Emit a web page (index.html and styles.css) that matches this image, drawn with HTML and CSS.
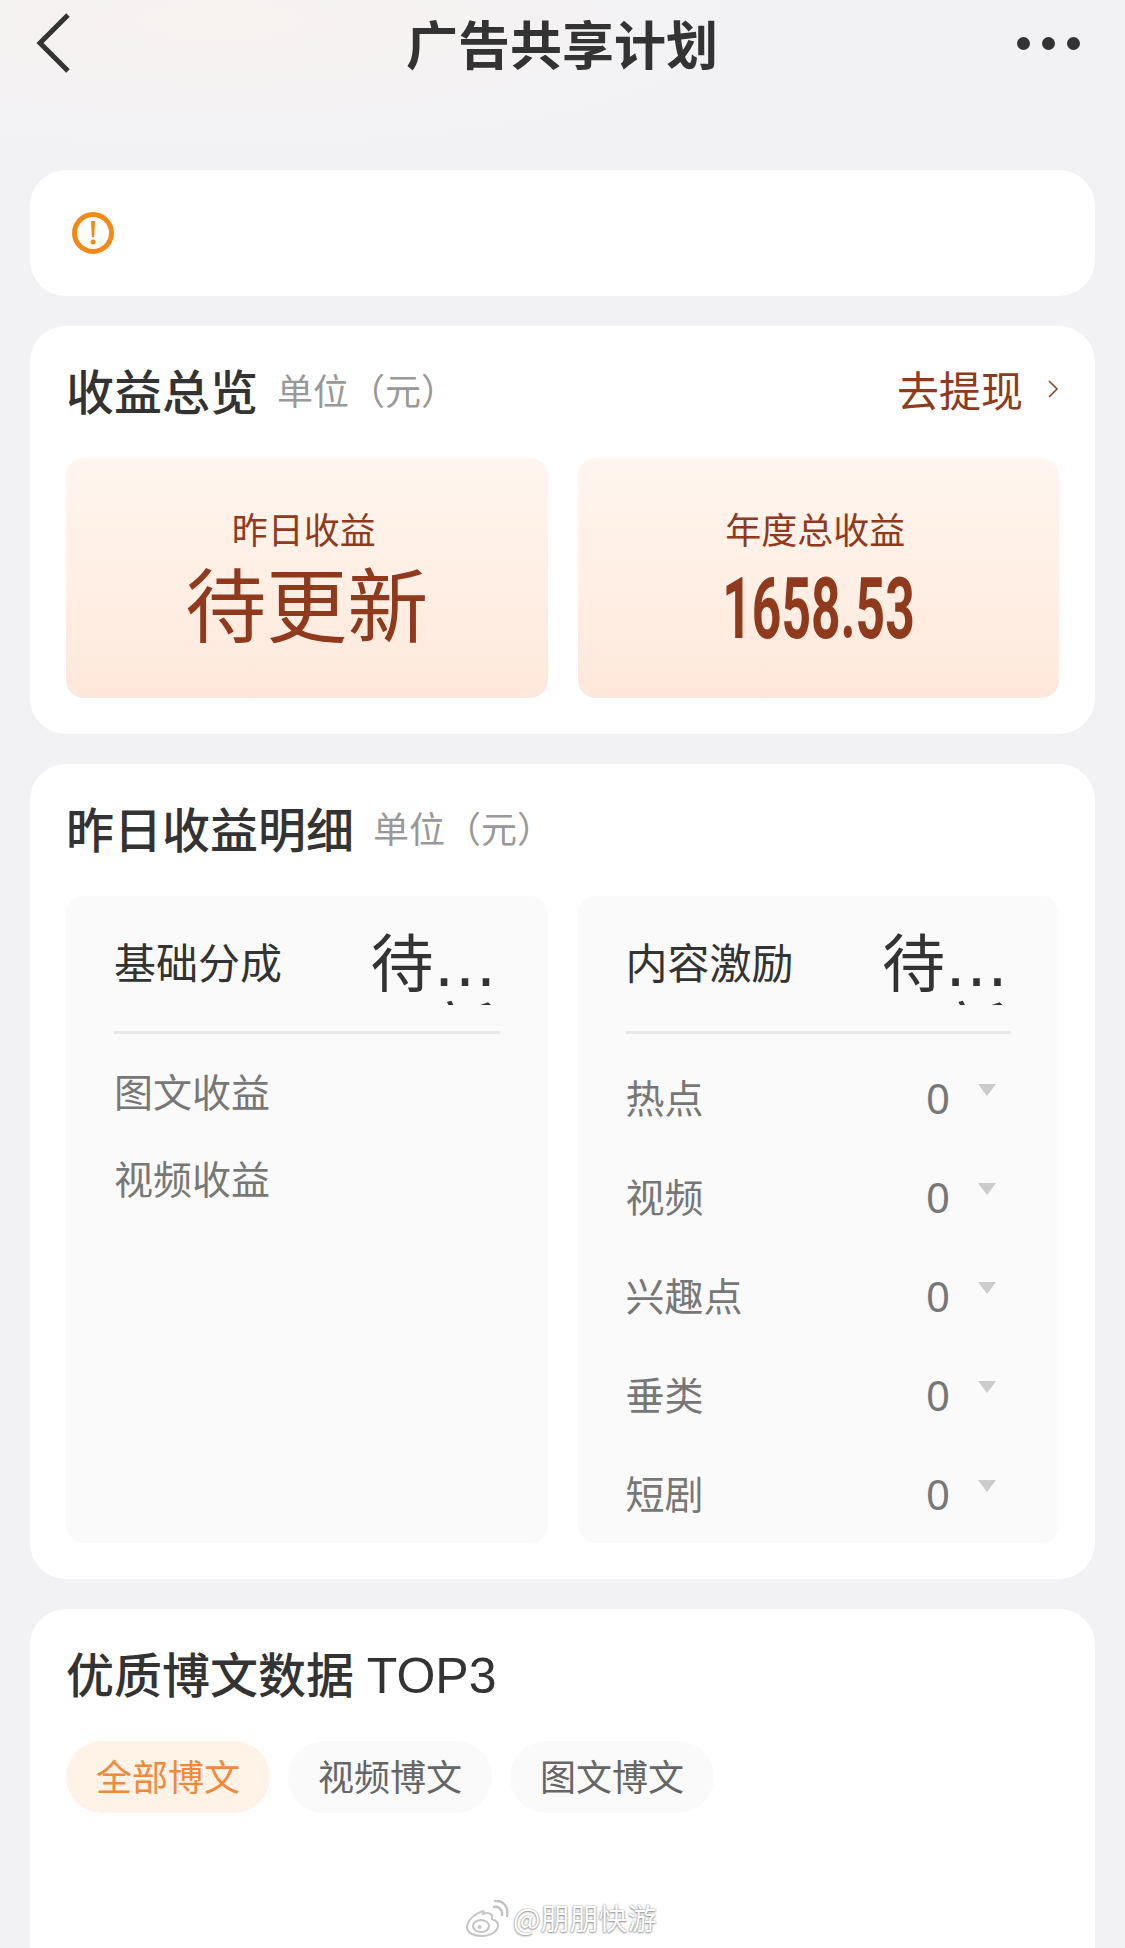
FILE: index.html
```html
<!DOCTYPE html>
<html lang="zh-CN">

<head>
    <meta charset="UTF-8">
    <meta name="viewport" content="width=device-width, initial-scale=1.0">
    <title>广告共享计划</title>
    <link rel="stylesheet" href="styles.css">
</head>

<body>
    <div class="page">

        <header class="nav">
            <svg class="nav-back" width="36" height="60" viewBox="0 0 36 60">
                <path d="M33 2 L5 30 L33 58" fill="none" stroke="#333" stroke-width="5" />
            </svg>
            <h1 class="nav-title">广告共享计划</h1>
            <div class="nav-more"><span></span><span></span><span></span></div>
        </header>

        <section class="card notice">
            <svg width="44" height="44" viewBox="0 0 44 44">
                <circle cx="22" cy="22" r="18.5" fill="none" stroke="#f28a17" stroke-width="5" />
                <path d="M20 10 h4 l-0.8 16 h-2.4 z" fill="#f28a17" />
                <circle cx="22" cy="31" r="2.5" fill="#f28a17" />
            </svg>
        </section>

        <section class="card">
            <div class="card-head">
                <h2 class="card-title">收益总览</h2>
                <span class="card-unit">单位（元）</span>
                <a class="withdraw">去提现
                    <svg width="12" height="20" viewBox="0 0 12 20">
                        <path d="M2 2 L10 10 L2 18" fill="none" stroke="#8f3a1c" stroke-width="1.5" />
                    </svg>
                </a>
            </div>
            <div class="two-col">
                <div class="total">
                    <p class="total-label">昨日收益</p>
                    <p class="total-value">待更新</p>
                </div>
                <div class="total">
                    <p class="total-label">年度总收益</p>
                    <p class="total-value"><span class="total-num">1658.53</span></p>
                </div>
            </div>
        </section>

        <section class="card">
            <div class="card-head">
                <h2 class="card-title">昨日收益明细</h2>
                <span class="card-unit">单位（元）</span>
            </div>
            <div class="two-col">
                <div class="detail">
                    <div class="detail-head">
                        <span class="detail-name">基础分成</span>
                        <span class="detail-value">待<span class="dots">…</span><br>新</span>
                    </div>
                    <div class="detail-list">
                        <div class="row row-short"><span class="row-name">图文收益</span></div>
                        <div class="row row-short"><span class="row-name">视频收益</span></div>
                    </div>
                </div>
                <div class="detail">
                    <div class="detail-head">
                        <span class="detail-name">内容激励</span>
                        <span class="detail-value">待<span class="dots">…</span><br>新</span>
                    </div>
                    <div class="detail-list">
                        <div class="row"><span class="row-name">热点</span><span class="row-num">0</span><i class="caret"></i></div>
                        <div class="row"><span class="row-name">视频</span><span class="row-num">0</span><i class="caret"></i></div>
                        <div class="row"><span class="row-name">兴趣点</span><span class="row-num">0</span><i class="caret"></i></div>
                        <div class="row"><span class="row-name">垂类</span><span class="row-num">0</span><i class="caret"></i></div>
                        <div class="row"><span class="row-name">短剧</span><span class="row-num">0</span><i class="caret"></i></div>
                    </div>
                </div>
            </div>
        </section>

        <section class="card card-last">
            <div class="card-head">
                <h2 class="card-title">优质博文数据 <span class="title-latin">TOP3</span></h2>
            </div>
            <div class="tabs">
                <span class="tab tab-active">全部博文</span>
                <span class="tab">视频博文</span>
                <span class="tab">图文博文</span>
            </div>
        </section>

        <div class="watermark">
            <svg class="watermark-logo" width="44" height="38" viewBox="0 0 44 38">
                <path d="M18 11 C9 14 2 21 2 27 C2 33 9 36 17 36 C26 36 33 31 33 25 C33 21 29 20 27 19 C28 15 26 13 22 13 C20 13 19 14 18 14 C19 12 19 11 18 11 Z" fill="#fff" stroke="#c4c4c4" stroke-width="2" />
                <ellipse cx="16" cy="26" rx="8" ry="6" fill="#fff" stroke="#c4c4c4" stroke-width="2" />
                <circle cx="14.5" cy="27" r="2" fill="#c4c4c4" />
                <path d="M29 7 C34 6 38 10 37 15 M30 1 C38 0 44 7 42 16" fill="none" stroke="#c4c4c4" stroke-width="2.5" stroke-linecap="round" />
            </svg>
            <span class="watermark-text">@朋朋快游</span>
        </div>

    </div>
</body>

</html>
```

FILE: styles.css
```css
* {
    box-sizing: border-box;
}

body {
    margin: 0;
    font-family: "Noto Sans CJK SC", "Noto Sans", sans-serif;
    color: #333;
}

h1,
h2,
p {
    margin: 0;
    font-weight: normal;
}

.page {
    position: relative;
    width: 1125px;
    height: 1948px;
    overflow: hidden;
    padding: 0 30px;
    background-color: #f2f2f5;
    background-image: radial-gradient(ellipse 520px 130px at 220px 20px, #f8f2f0 0%, #f2f2f5 100%);
}

/* nav */
.nav {
    display: flex;
    align-items: center;
    justify-content: space-between;
    height: 86px;
    margin-bottom: 84px;
    padding: 0 15px 0 5px;
}

.nav-title {
    font-size: 52px;
    font-weight: 700;
    line-height: 86px;
    margin-left: 36px;
}

.nav-more {
    display: flex;
    gap: 12px;
}

.nav-more span {
    width: 13px;
    height: 13px;
    border-radius: 50%;
    background: #333;
}

/* cards */
.card {
    background: #fff;
    border-radius: 36px;
    padding: 36px;
    margin-bottom: 30px;
}

.notice {
    display: flex;
    align-items: center;
    height: 126px;
    padding: 0 0 0 41px;
}

.card-head {
    display: flex;
    align-items: center;
    height: 58px;
    padding-bottom: 5px;
    margin-bottom: 38px;
}

.card-title {
    font-size: 48px;
    font-weight: 500;
}

.title-latin {
    font-family: "Liberation Sans", sans-serif;
    font-size: 50px;
    font-weight: normal;
    margin-left: 2px;
}

.card-unit {
    font-size: 36px;
    color: #999;
    margin-left: 19px;
}

.withdraw {
    display: flex;
    align-items: center;
    gap: 24px;
    margin-left: auto;
    font-size: 42px;
    color: #8f3a1c;
}

.two-col {
    display: grid;
    grid-template-columns: 1fr 1fr;
    gap: 30px;
}

/* overview */
.total {
    height: 240px;
    padding-top: 45px;
    border-radius: 18px;
    text-align: center;
    color: #8f3a1c;
    background: linear-gradient(180deg, #fff6ef 0%, #ffe8db 100%);
}

.total-label {
    padding-right: 6px;
    font-size: 36px;
    line-height: 50px;
}

.total-value {
    margin-top: -2px;
    font-size: 81px;
    line-height: 100px;
}

.total-num {
    display: inline-block;
    font-family: Roboto, sans-serif;
    font-size: 86px;
    font-weight: 700;
    vertical-align: -2px;
    transform: scaleX(0.6);
}

/* detail */
.detail {
    height: 647px;
    padding: 32px 48px 0;
    border-radius: 18px;
    background: #fafafa;
}

.detail-head {
    display: flex;
    justify-content: space-between;
    height: 106px;
    border-bottom: 3px solid #e8e8e8;
}

.detail-name {
    font-size: 42px;
    line-height: 66px;
}

.detail-value {
    width: 126px;
    height: 77px;
    margin-right: 3px;
    overflow: hidden;
    font-size: 63px;
    line-height: 62px;
    text-align: right;
}

.dots {
    font-family: "DejaVu Sans", sans-serif;
}

.detail-list {
    padding-top: 12px;
}

.row {
    display: flex;
    align-items: center;
    height: 99px;
    padding-right: 15px;
    font-size: 39px;
    color: #777;
}

.row-short {
    height: 87px;
}

.row-name {
    flex: 1;
}

.row-num {
    font-family: "Noto Sans", sans-serif;
    font-size: 42px;
    line-height: 50px;
    margin-top: 4px;
    margin-right: 28px;
}

.caret {
    align-self: flex-start;
    margin-top: 38px;
    border-top: 12px solid #ccc;
    border-left: 9px solid transparent;
    border-right: 9px solid transparent;
}

/* tabs */
.card-last {
    height: 600px;
}

.tabs {
    display: flex;
    gap: 18px;
}

.tab {
    width: 204px;
    height: 72px;
    border-radius: 36px;
    font-size: 36px;
    line-height: 68px;
    text-align: center;
    color: #666;
    background: #fafafa;
}

.tab-active {
    color: #f08a3a;
    background: #fff3e8;
}

/* watermark lies over the last card */
.watermark {
    position: absolute;
    left: 465px;
    top: 1896px;
    display: flex;
    align-items: center;
    gap: 4px;
}

.watermark-logo {
    margin-top: 3px;
}

.watermark-text {
    font-size: 29px;
    color: #fff;
    text-shadow: 0 0 2px #888, 0 1px 2px #999;
}
```
